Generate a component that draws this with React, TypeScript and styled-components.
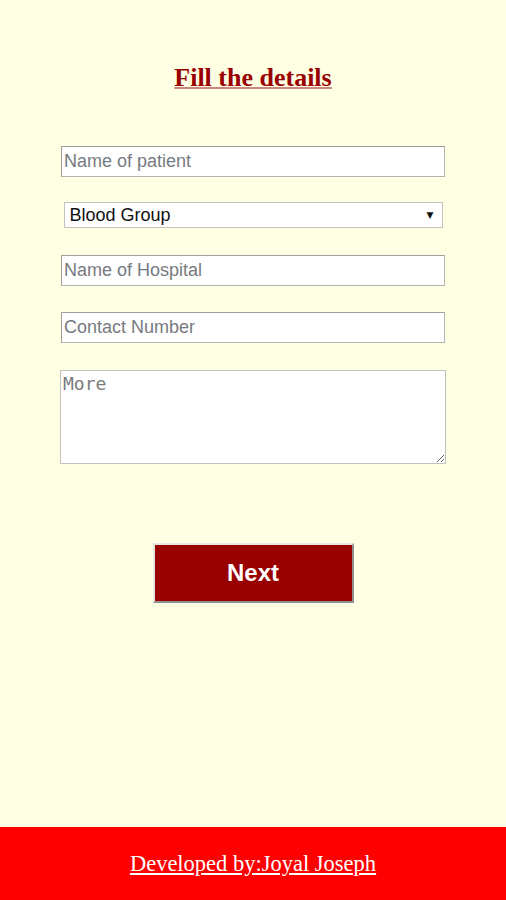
import styled, { createGlobalStyle } from 'styled-components'

const GlobalStyle = createGlobalStyle`
  html, body {
    margin: 0;
    padding: 0;
    background-color: #ffffe3;
  }
  #root {
    min-height: 100vh;
  }
`

export default function App() {
  const fields = [
    { id: 'patient', placeholder: 'Name of patient' },
    { id: 'hospital', placeholder: 'Name of Hospital' },
    { id: 'contact', placeholder: 'Contact Number' },
  ]

  return (
    <>
      <GlobalStyle />
      <Page>
        <Main>
          <Title>Fill the details</Title>
          <Form>
            <TextInput id={fields[0].id} placeholder={fields[0].placeholder} />
            <SelectWrap>
              <Select defaultValue="">
                <option value="">Blood Group</option>
                <option>A+</option>
                <option>A-</option>
                <option>B+</option>
                <option>B-</option>
                <option>O+</option>
                <option>O-</option>
                <option>AB+</option>
                <option>AB-</option>
              </Select>
              <Arrow>▼</Arrow>
            </SelectWrap>
            <TextInput id={fields[1].id} placeholder={fields[1].placeholder} />
            <TextInput id={fields[2].id} placeholder={fields[2].placeholder} />
            <TextArea placeholder="More" />
          </Form>
          <NextButton type="button">Next</NextButton>
        </Main>
        <Footer>
          <FooterLink href="#">Developed by:Joyal Joseph</FooterLink>
        </Footer>
      </Page>
    </>
  )
}

const Page = styled.div`
  display: flex;
  flex-direction: column;
  min-height: 100vh;
`

const Main = styled.div`
  flex: 1;
  display: flex;
  flex-direction: column;
  align-items: center;
  padding-top: 61px;
`

const Title = styled.h1`
  margin: 0;
  font-family: "Liberation Serif", "Times New Roman", serif;
  font-size: 26px;
  font-weight: bold;
  color: #990000;
  text-decoration: underline;
  text-decoration-thickness: 2px;
  text-decoration-color: #c9877f;
  line-height: 34px;
`

const Form = styled.div`
  display: flex;
  flex-direction: column;
  width: 384px;
  margin-top: 51px;
`

const TextInput = styled.input`
  box-sizing: border-box;
  width: 384px;
  height: 31px;
  margin-bottom: 25px;
  padding: 2px 3px 2px 2px;
  border: 1px solid #b5b5b0;
  border-top-color: #a0a09a;
  border-left-color: #a0a09a;
  background: #ffffff;
  font-family: "Liberation Sans", Arial, sans-serif;
  font-size: 18px;
  color: #222;
  outline: none;
  &::placeholder {
    color: #777a80;
  }
  &:nth-of-type(2) {
    margin-bottom: 26px;
  }
`

const SelectWrap = styled.div`
  position: relative;
  align-self: center;
  width: 379px;
  height: 26px;
  margin-bottom: 27px;
`

const Select = styled.select`
  box-sizing: border-box;
  width: 100%;
  height: 26px;
  padding: 0 20px 0 5px;
  border: 1px solid #c4c4bd;
  border-radius: 0;
  background: #ffffff;
  appearance: none;
  font-family: "Liberation Sans", Arial, sans-serif;
  font-size: 18px;
  color: #111;
  outline: none;
`

const Arrow = styled.span`
  position: absolute;
  right: 9px;
  top: 8px;
  font-size: 9px;
  line-height: 11px;
  color: #111;
  pointer-events: none;
  font-family: "DejaVu Sans", sans-serif;
`

const TextArea = styled.textarea`
  box-sizing: border-box;
  align-self: center;
  width: 386px;
  height: 94px;
  margin-top: 2px;
  padding: 2px 2px;
  border: 1px solid #c2c2bd;
  background: #ffffff;
  font-family: "DejaVu Sans Mono", "Liberation Mono", monospace;
  font-size: 18px;
  outline: none;
  &::placeholder {
    color: #7a7a7a;
  }
`

const NextButton = styled.button`
  box-sizing: border-box;
  width: 201px;
  height: 60px;
  margin-top: 79px;
  background-color: #990000;
  border: 2px solid;
  border-color: #e8e6df #8f8f8f #8f8f8f #e8e6df;
  color: #ffffff;
  font-family: "Liberation Sans", Arial, sans-serif;
  font-size: 24px;
  font-weight: bold;
  cursor: pointer;
`

const Footer = styled.footer`
  display: flex;
  align-items: center;
  justify-content: center;
  height: 73px;
  background-color: #ff0000;
`

const FooterLink = styled.a`
  font-family: "Liberation Serif", "Times New Roman", serif;
  font-size: 22.5px;
  color: #ffffff;
  text-decoration: underline;
`
